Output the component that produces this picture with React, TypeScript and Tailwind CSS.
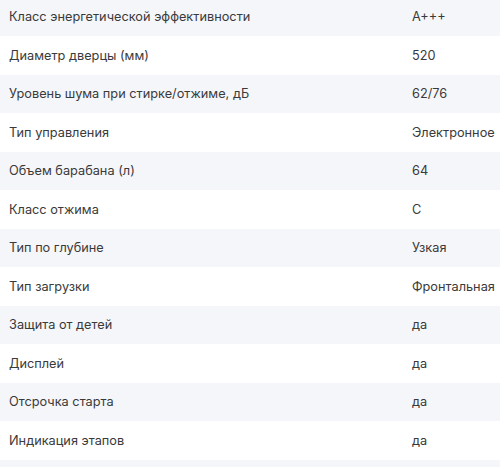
import React from "react";

const rows: [string, string][] = [
  ["Класс энергетической эффективности", "A+++"],
  ["Диаметр дверцы (мм)", "520"],
  ["Уровень шума при стирке/отжиме, дБ", "62/76"],
  ["Тип управления", "Электронное"],
  ["Объем барабана (л)", "64"],
  ["Класс отжима", "C"],
  ["Тип по глубине", "Узкая"],
  ["Тип загрузки", "Фронтальная"],
  ["Защита от детей", "да"],
  ["Дисплей", "да"],
  ["Отсрочка старта", "да"],
  ["Индикация этапов", "да"],
  ["", ""],
];

export default function App() {
  return (
    <div className="w-[500px] h-[467px] overflow-hidden bg-white" style={{ fontFamily: "Inter, 'Noto Sans', sans-serif" }}>
      <div className="-mt-[2.5px] flex flex-col">
        {rows.map(([k, v], i) => (
          <div
            key={i}
            className={`flex items-center h-[38.5px] shrink-0 text-[12.75px] text-[#3a3a3a] ${i % 2 === 0 ? "bg-[#f5f6fa]" : "bg-white"}`}
          >
            <div className="w-[412px] pl-[9px] shrink-0 whitespace-nowrap">{k}</div>
            <div className="whitespace-nowrap">{v}</div>
          </div>
        ))}
      </div>
    </div>
  );
}
